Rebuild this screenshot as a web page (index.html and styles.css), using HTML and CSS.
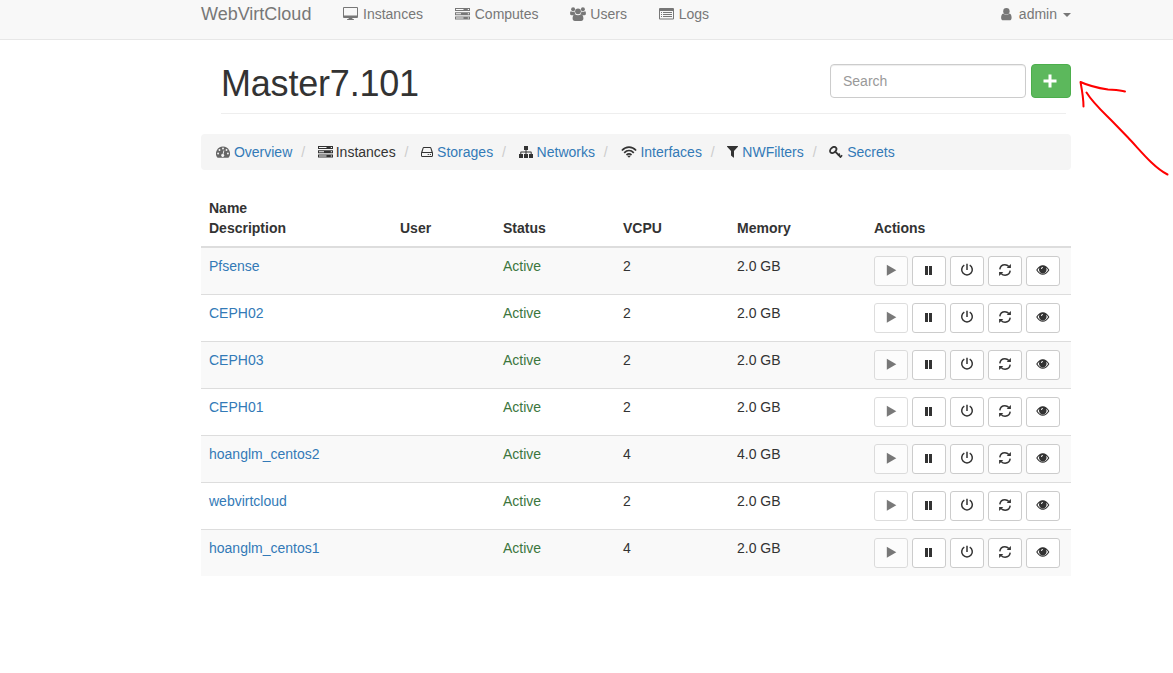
FILE: index.html
```html
<!DOCTYPE html>
<html lang="en">
<head>
<meta charset="utf-8">
<title>WebVirtCloud</title>
<link rel="stylesheet" href="styles.css">
</head>
<body>
<svg class="sprite" aria-hidden="true">
  <symbol id="desktop" viewBox="0 0 15 14"><path fill-rule="evenodd" d="M1 0h13a1 1 0 0 1 1 1v9a1 1 0 0 1-1 1H9.400v1h1a.6.6 0 0 1 .6.6v.5H4v-.5a.6.6 0 0 1 .6-.6h1v-1H1a1 1 0 0 1-1-1V1a1 1 0 0 1 1-1zM1 1v7.500h13V1z"/></symbol>
  <symbol id="server" viewBox="0 0 15 12"><path d="M0 0h15v3H0zM0 4.200h15v3H0zM0 8.400h15v3H0z"/><path class="gap" d="M1 1h7.500v1H1zM1 5.200h5v1H1zM1 9.400h7.500v1H1zM12.800 1h1.200v1h-1.200zM12.800 5.200h1.200v1h-1.200zM12.800 9.400h1.200v1h-1.200z"/></symbol>
  <symbol id="users" viewBox="0 0 16 14"><circle cx="3.100" cy="2.300" r="2"/><circle cx="12.900" cy="2.300" r="2"/><circle cx="8" cy="4.300" r="2.900"/><path d="M1 4.200c1 .7 2.800.8 3.700.3-.1 1.100.2 1.900.8 2.700-1 0-1.800.3-2.300 1H1.500C.4 8.200.1 7.600.1 6.500.1 5.500.3 4 1 4.200zM15 4.200c-1 .7-2.800.8-3.700.3.1 1.100-.2 1.900-.8 2.700 1 0 1.800.3 2.300 1h1.700c1.100 0 1.400-.6 1.400-1.700 0-1-.2-2.500-.9-2.300zM5 7.200c1.700 1.300 4.300 1.300 6 0 1.800.1 2.400 2.200 2.400 4.400 0 1.500-.8 2.300-2.300 2.300H4.900c-1.500 0-2.300-.8-2.300-2.300C2.600 9.400 3.200 7.300 5 7.200z"/></symbol>
  <symbol id="list" viewBox="0 0 15 12"><path fill-rule="evenodd" d="M1 0h13a1 1 0 0 1 1 1v9.500a1 1 0 0 1-1 1H1a1 1 0 0 1-1-1V1a1 1 0 0 1 1-1zM1 3v7.500h13V3z"/><path d="M2 4h1v1H2zM4 4h9v1H4zM2 6h1v1H2zM4 6h9v1H4zM2 8h1v1H2zM4 8h9v1H4z"/></symbol>
  <symbol id="user" viewBox="0 0 11 13"><circle cx="5.400" cy="3.200" r="3.200"/><path d="M2.300 5.500c1.700 1.600 4.500 1.600 6.200 0C10 5.700 10.600 7.600 10.600 9.700c0 1.700-.8 2.600-2.200 2.600H2.300C.9 12.300.1 11.400.1 9.700.1 7.600.8 5.700 2.300 5.500z"/></symbol>
  <symbol id="gauge" viewBox="0 0 14 12"><path d="M7 .5a7 7 0 0 1 5.900 10.800c-.2.300-.4.400-.7.400H1.800c-.3 0-.5-.1-.7-.4A7 7 0 0 1 7 .5z"/><g class="gap"><circle cx="2.100" cy="7.500" r=".95"/><circle cx="3.500" cy="4" r=".95"/><circle cx="7" cy="2.500" r=".95"/><circle cx="10.500" cy="4" r=".95"/><circle cx="11.900" cy="7.500" r=".95"/><path d="M7.500 4.400l.9.200-.9 3.500a1.500 1.500 0 1 1-.9-.2z"/></g></symbol>
  <symbol id="disk" viewBox="0 0 12 10"><path fill-rule="evenodd" d="M2.800 0h6.400c.6 0 1 .3 1.200.9L12 5.700v3.100c0 .7-.5 1.200-1.200 1.200H1.200C.5 10 0 9.500 0 8.800V5.700L1.600.9C1.800.3 2.200 0 2.800 0zM1.500 5h9L9.400 1.200 9.200 1H2.800l-.2.200zM1 6v2.800l.2.200h9.600l.2-.2V6z"/><path d="M6.700 7h1.100v1.100H6.700zM8.800 7h1.100v1.100H8.800z"/></symbol>
  <symbol id="sitemap" viewBox="0 0 14 12"><path d="M5 0h4v4H7.500v1.500H12c.4 0 .7.300.7.700V8H14v4h-4V8h1.700V6.500H7.500V8H9v4H5V8h1.500V6.500H2.300V8H4v4H0V8h1.300V6.200c0-.4.300-.7.700-.7h4.500V4H5z"/></symbol>
  <symbol id="wifi" viewBox="0 0 16 12"><g fill="none" stroke="currentColor" stroke-width="1.700"><path d="M.9 4.500C5 .1 11 .1 15.100 4.500"/><path d="M3.200 6.800c2.900-2.900 6.700-2.900 9.600 0"/><path d="M5.500 9c1.600-1.400 3.400-1.400 5 0"/></g><path d="M6.400 10.100c1-.8 2.200-.8 3.200 0L8 11.700z"/></symbol>
  <symbol id="filter" viewBox="0 0 11 12"><path d="M.4 0h10.200c.4 0 .5.400.3.700L7 5v6.300c0 .3-.4.500-.7.300L4.300 9.800c-.2-.2-.3-.4-.3-.6V5L.1.700C-.1.400 0 0 .4 0z"/></symbol>
  <symbol id="key" viewBox="0 0 14 13"><g fill="none" stroke="currentColor"><ellipse cx="4.200" cy="4" rx="3.600" ry="2.500" transform="rotate(-42 4.200 4)" stroke-width="1.800"/><path d="M6 5.300l6 6" stroke-width="1.900"/><path d="M9.100 9.500l1.700-1.900M11.100 11.500l2-2.300" stroke-width="1.600"/></g></symbol>
  <symbol id="play" viewBox="0 0 14 14"><path d="M2.800 1.800v11L12.300 7.300z"/></symbol>
  <symbol id="pause" viewBox="0 0 14 14"><path d="M3 3h3v9H3zM7 3h3v9H7z"/></symbol>
  <symbol id="power" viewBox="0 0 14 14"><path fill="none" stroke="currentColor" stroke-width="1.500" d="M4.300 2.100a5.300 5.300 0 1 0 5.400 0M7 .800v6.200"/></symbol>
  <symbol id="refresh" viewBox="0 0 14 14"><path fill="none" stroke="currentColor" stroke-width="1.500" d="M1.800 6.300C2.200 3.500 4.300 1.800 6.900 1.800c1.600 0 2.900.6 4 1.800M12.200 7.700C11.800 10.500 9.700 12.200 7.100 12.200c-1.600 0-2.900-.6-4-1.800"/><path d="M12.900 1v4.100H8.700zM1.100 13V8.900h4.200z"/></symbol>
  <symbol id="eye" viewBox="0 0 14 14"><path fill-rule="evenodd" d="M.2 7C2 3.800 4.200 2.200 6.800 2.200S11.600 3.800 13.400 7c-1.800 3.200-4 4.800-6.600 4.800S2 10.200.2 7zM1.500 7c1.300 2.400 3.200 3.700 5.300 3.700s4-1.300 5.300-3.700a7 7 0 0 0-2-2.300 3.800 3.800 0 1 1-6.600 0A7 7 0 0 0 1.500 7z"/><circle cx="6.800" cy="6" r="3.200"/><path class="glint" d="M5 6a1.900 1.900 0 0 1 1.900-1.900v.9A1 1 0 0 0 5.900 6z"/></symbol>
</svg>

<nav class="navbar">
  <div class="container bar">
    <a class="brand">WebVirtCloud</a>
    <div class="menu">
      <a><svg class="i-desktop"><use href="#desktop"/></svg>Instances</a>
      <a><svg class="i-server"><use href="#server"/></svg>Computes</a>
      <a><svg class="i-users"><use href="#users"/></svg>Users</a>
      <a><svg class="i-list"><use href="#list"/></svg>Logs</a>
    </div>
    <a class="account"><svg class="i-user"><use href="#user"/></svg>admin<span class="caret"></span></a>
  </div>
</nav>

<main class="container">
  <header class="heading">
    <h1>Master7.101</h1>
    <form class="tools">
      <input type="text" placeholder="Search" aria-label="Search">
      <button type="button" class="add" aria-label="Add"><svg viewBox="0 0 14 14"><path d="M5.500.5h3v5h5v3h-5v5h-3v-5h-5v-3h5z"/></svg></button>
    </form>
  </header>

  <ol class="crumbs">
    <li><svg class="c-gauge"><use href="#gauge"/></svg> <a>Overview</a></li>
    <li> <svg class="c-server"><use href="#server"/></svg> Instances</li>
    <li> <svg class="c-disk"><use href="#disk"/></svg> <a>Storages</a></li>
    <li> <svg class="c-sitemap"><use href="#sitemap"/></svg> <a>Networks</a></li>
    <li> <svg class="c-wifi"><use href="#wifi"/></svg> <a>Interfaces</a></li>
    <li> <svg class="c-filter"><use href="#filter"/></svg> <a>NWFilters</a></li>
    <li> <svg class="c-key"><use href="#key"/></svg> <a>Secrets</a></li>
  </ol>

  <table class="hosts">
    <colgroup><col class="w-name"><col class="w-user"><col class="w-status"><col class="w-cpu"><col class="w-mem"><col></colgroup>
    <thead><tr><th>Name<br>Description</th><th>User</th><th>Status</th><th>VCPU</th><th>Memory</th><th>Actions</th></tr></thead>
    <tbody>
      <tr><td><a>Pfsense</a></td><td></td><td class="ok">Active</td><td>2</td><td>2.0 GB</td><td><div class="actions"><button disabled><svg><use href="#play"/></svg></button><button><svg><use href="#pause"/></svg></button><button><svg><use href="#power"/></svg></button><button><svg><use href="#refresh"/></svg></button><button><svg><use href="#eye"/></svg></button></div></td></tr>
      <tr><td><a>CEPH02</a></td><td></td><td class="ok">Active</td><td>2</td><td>2.0 GB</td><td><div class="actions"><button disabled><svg><use href="#play"/></svg></button><button><svg><use href="#pause"/></svg></button><button><svg><use href="#power"/></svg></button><button><svg><use href="#refresh"/></svg></button><button><svg><use href="#eye"/></svg></button></div></td></tr>
      <tr><td><a>CEPH03</a></td><td></td><td class="ok">Active</td><td>2</td><td>2.0 GB</td><td><div class="actions"><button disabled><svg><use href="#play"/></svg></button><button><svg><use href="#pause"/></svg></button><button><svg><use href="#power"/></svg></button><button><svg><use href="#refresh"/></svg></button><button><svg><use href="#eye"/></svg></button></div></td></tr>
      <tr><td><a>CEPH01</a></td><td></td><td class="ok">Active</td><td>2</td><td>2.0 GB</td><td><div class="actions"><button disabled><svg><use href="#play"/></svg></button><button><svg><use href="#pause"/></svg></button><button><svg><use href="#power"/></svg></button><button><svg><use href="#refresh"/></svg></button><button><svg><use href="#eye"/></svg></button></div></td></tr>
      <tr><td><a>hoanglm_centos2</a></td><td></td><td class="ok">Active</td><td>4</td><td>4.0 GB</td><td><div class="actions"><button disabled><svg><use href="#play"/></svg></button><button><svg><use href="#pause"/></svg></button><button><svg><use href="#power"/></svg></button><button><svg><use href="#refresh"/></svg></button><button><svg><use href="#eye"/></svg></button></div></td></tr>
      <tr><td><a>webvirtcloud</a></td><td></td><td class="ok">Active</td><td>2</td><td>2.0 GB</td><td><div class="actions"><button disabled><svg><use href="#play"/></svg></button><button><svg><use href="#pause"/></svg></button><button><svg><use href="#power"/></svg></button><button><svg><use href="#refresh"/></svg></button><button><svg><use href="#eye"/></svg></button></div></td></tr>
      <tr><td><a>hoanglm_centos1</a></td><td></td><td class="ok">Active</td><td>4</td><td>2.0 GB</td><td><div class="actions"><button disabled><svg><use href="#play"/></svg></button><button><svg><use href="#pause"/></svg></button><button><svg><use href="#power"/></svg></button><button><svg><use href="#refresh"/></svg></button><button><svg><use href="#eye"/></svg></button></div></td></tr>
    </tbody>
  </table>
</main>

<svg class="arrow" viewBox="1073 73 100 110" aria-hidden="true"><path d="M1083.500 106.500C1083.500 98 1082 90 1080.500 82C1088 85.500 1098 88 1108 89.500C1115 90 1120 90 1125 91.500M1086.500 92.500C1093 103 1103 112 1112 121L1128 137.500C1140 150 1153 167 1167.500 174.500"/></svg>
</body>
</html>
```
FILE: styles.css
```css
* { box-sizing: border-box; }
body {
  margin: 0;
  height: 673px;
  overflow: hidden;
  position: relative;
  background: #fff;
  color: #333;
  font: 14px/20px "Liberation Sans", Arial, sans-serif;
}
svg { fill: currentColor; }
.gap { fill: var(--gap); }
.sprite { position: absolute; width: 0; height: 0; }
.container { width: 870px; margin-left: 201px; }

.navbar { --gap: #f8f8f8; height: 40px; background: #f8f8f8; border-bottom: 1px solid #e7e7e7; color: #777; }
.bar { display: flex; padding-top: 4px; }
.brand { width: 142px; font-size: 18px; }
.menu { display: flex; gap: 31.8px; }
.menu a, .account { display: flex; align-items: flex-start; }
.menu svg { flex: none; width: 15px; height: 12px; margin: 4px 5px 0 0; }
.menu .i-desktop { height: 14px; margin-top: 3px; }
.menu .i-users { width: 16px; height: 14px; margin: 3px 4px 0 0; }
.account { margin-left: auto; }
.i-user { width: 11px; height: 13px; margin: 4px 7px 0 0; }
.caret { margin: 9px 0 0 6px; border: 4px solid transparent; border-top-color: #777; border-bottom: 0; }

.heading { display: flex; height: 74px; margin: 0 0 20px 20px; padding-top: 24px; background: linear-gradient(#eee, #eee) 0 100% / 845px 1px no-repeat; }
h1 { margin: 0; font-size: 36px; font-weight: 400; line-height: 39.6px; letter-spacing: -.2px; }
.tools { display: flex; gap: 5px; margin-left: auto; }
.tools input {
  width: 196px;
  height: 34px;
  padding: 6px 12px;
  border: 1px solid #ccc;
  border-radius: 4px;
  box-shadow: inset 0 1px 1px rgba(0, 0, 0, .075);
  font: inherit;
}
.tools input::placeholder { color: #999; opacity: 1; }
.add { display: grid; place-items: center; width: 40px; height: 34px; padding: 0 2px 1px 0; border: 1px solid #4cae4c; border-radius: 4px; background: #5cb85c; color: #fff; }
.add svg { width: 14px; height: 14px; }

.crumbs { --gap: #f5f5f5; display: block; height: 36px; margin: 0 0 20px; padding: 8px 15px; border-radius: 4px; background: #f5f5f5; list-style: none; white-space: nowrap; }
.crumbs li { display: inline-block; }
.crumbs li + li::before { content: "/\00a0"; padding: 0 5px; color: #ccc; }
.crumbs svg { width: 14px; height: 12px; vertical-align: -1px; }
.crumbs .c-gauge { color: #666; }
.crumbs .c-server { width: 15px; margin-right: -1px; }
.crumbs .c-disk { width: 12px; height: 10px; vertical-align: 0; }
.crumbs .c-wifi { width: 16px; }
.crumbs .c-filter { width: 11px; }
.crumbs .c-key { height: 13px; vertical-align: -2px; }
.crumbs a, td a { color: #337ab7; }

.hosts { width: 870px; table-layout: fixed; border-collapse: separate; border-spacing: 0; }
.w-name { width: 191px; }
.w-user { width: 103px; }
.w-status { width: 120px; }
.w-cpu { width: 114px; }
.w-mem { width: 137px; }
th { padding: 8px; border-bottom: 2px solid #ddd; text-align: left; vertical-align: bottom; }
td { height: 47px; padding: 8px; border-bottom: 1px solid #ddd; vertical-align: top; }
tr:last-child td { height: 46px; }
tbody tr:last-child td { border-bottom: 0; }
tbody tr:nth-child(odd) { background: #f9f9f9; }
.ok { color: #3c763d; }
.actions { display: flex; gap: 4px; }
.actions button { display: grid; place-items: center; width: 34px; height: 30px; padding: 0 0 2px; border: 1px solid #ccc; border-radius: 3px; background: #fff; color: #333; }
.actions button:disabled { opacity: .65; }
.actions svg { width: 14px; height: 14px; }
.glint { fill: #fff; }

.arrow { position: absolute; left: 1073px; top: 73px; width: 100px; height: 110px; fill: none; stroke: #f00; stroke-width: 2; stroke-linecap: round; stroke-linejoin: round; }
```
